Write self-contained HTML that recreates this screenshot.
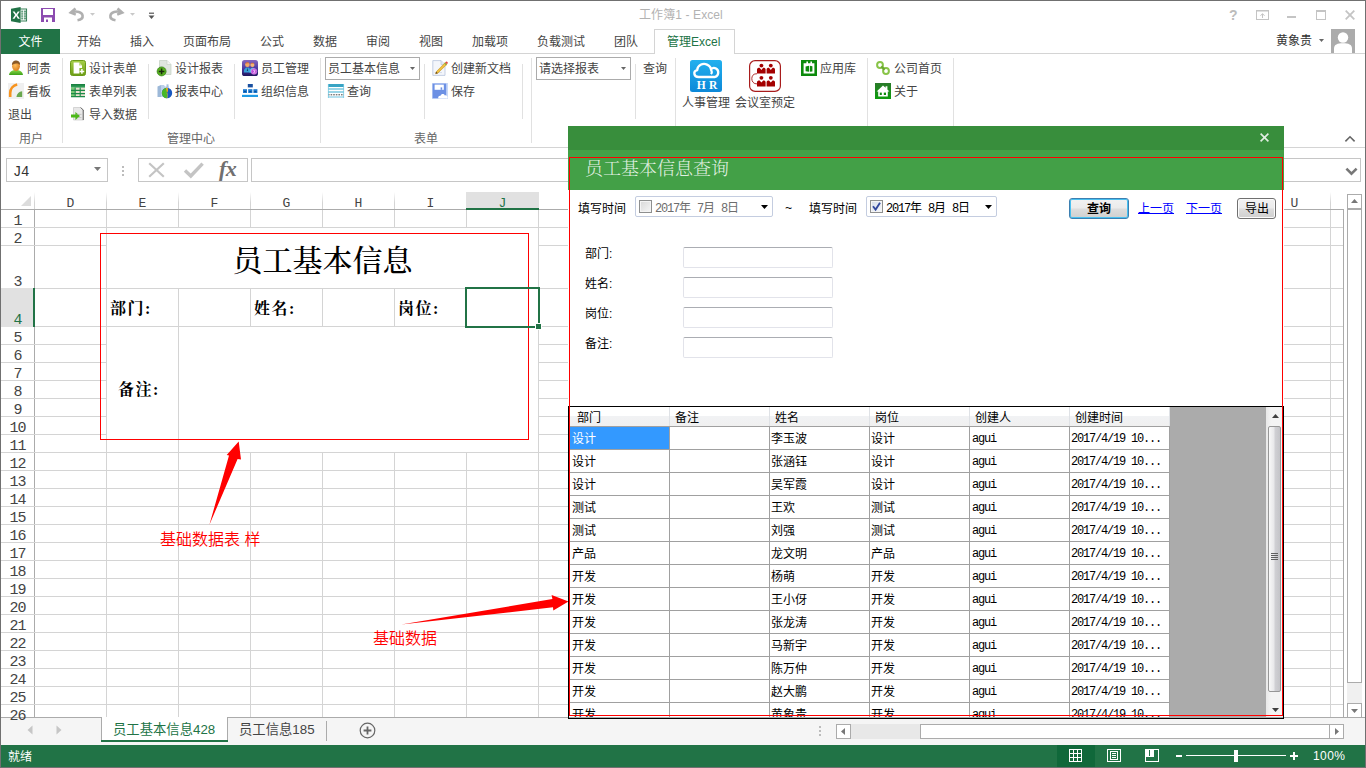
<!DOCTYPE html>
<html lang="zh-CN">
<head>
<meta charset="utf-8">
<title>工作簿1 - Excel</title>
<style>
*{box-sizing:border-box;margin:0;padding:0}
html,body{width:1366px;height:768px;overflow:hidden;background:#fff}
body{position:relative;font-family:"Liberation Sans","Noto Sans CJK SC",sans-serif;font-size:12px;color:#444;line-height:1}
.abs{position:absolute}
.t{position:absolute;white-space:nowrap;line-height:16px;height:16px}
svg{position:absolute;overflow:visible}
/* window frame */
#frame{left:0;top:0;width:1366px;height:768px;border:1px solid #707070;z-index:50;pointer-events:none}
/* tabs */
.tab{position:absolute;top:33px;height:18px;line-height:18px;font-size:12px;color:#444;white-space:nowrap}
#filetab{left:1px;top:29px;width:59px;height:25px;background:#217346;color:#fff;text-align:center;line-height:26px;font-size:12px}
#tabline{left:1px;top:53px;width:1364px;height:1px;background:#d4d4d4}
#acttab{left:654px;top:29px;width:81px;height:25px;border:1px solid #d4d4d4;border-bottom:none;background:#fff}
/* ribbon */
.rb{position:absolute;font-size:12px;color:#444;white-space:nowrap;line-height:16px;height:16px}
.sep{position:absolute;width:1px;background:#e1e1e1}
.glabel{position:absolute;top:131px;font-size:12px;color:#666;line-height:16px;white-space:nowrap}
#ribline{left:1px;top:147px;width:1364px;height:1px;background:#d4d4d4}
.combo{position:absolute;height:21px;border:1px solid #ababab;background:#fff;font-size:12px;line-height:23px;padding-left:2px;color:#444;white-space:nowrap}
/* grid */
.ch{position:absolute;z-index:3;top:192px;height:17px;font-family:"Liberation Mono","Noto Serif CJK SC",monospace;font-size:13px;color:#444;text-align:center;line-height:24px}
.rh{position:absolute;z-index:3;left:1px;width:33px;font-family:"Liberation Mono","Noto Serif CJK SC",monospace;font-size:15px;color:#444;line-height:16px;height:16px;text-align:center;letter-spacing:-1px}
.vl{position:absolute;width:1px;background:#d4d4d4}
.hl{position:absolute;height:1px;background:#d4d4d4}
.b16{font-size:16px;font-weight:bold;line-height:20px;letter-spacing:1.5px}
.cell{position:absolute;font-family:"Liberation Serif","Noto Serif CJK SC",serif;color:#000;white-space:nowrap}
.dt{position:absolute;white-space:nowrap;font-size:12px;line-height:18px;height:16px;color:#000;font-family:"Liberation Sans","Noto Sans CJK SC",sans-serif}
.mn{font-family:"Liberation Mono",monospace;font-size:12px;letter-spacing:-1.2px}
.mn2{font-family:"Liberation Mono",monospace;font-size:12px;letter-spacing:-1.2px}
.dp{position:absolute;height:21px;border:1px solid #c4cde0;border-radius:2px;background:#fff}
.tb{position:absolute;width:150px;height:21px;border:1px solid #e2e3ea;border-top-color:#abadb3;border-radius:2px;background:#fff}
</style>
</head>
<body>
<!-- ===== TITLE BAR ===== -->
<div id="titlebar" class="abs" style="left:0;top:0;width:1366px;height:29px;background:#fff"></div>
<div class="t" style="left:639px;top:7px;font-size:12px;color:#b2b2b2;letter-spacing:0.1px">工作簿1 - Excel</div>

<!--CHROME-START-->
<!-- QAT icons -->
<svg style="left:11px;top:7px" width="16" height="16" viewBox="0 0 16 16"><rect x="8" y="2" width="7.6" height="12" fill="#fff" stroke="#217346" stroke-width="0.9"/><path d="M10.2 4.2h2M13 4.2h2M10.2 6.1h2M13 6.1h2M10.2 8h2M13 8h2M10.2 9.9h2M13 9.9h2M10.2 11.8h2M13 11.8h2" stroke="#217346" stroke-width="1" fill="none"/><path d="M0 1.8L9.6 0V16L0 14.2Z" fill="#217346"/><path d="M1.6 4.4L4.1 8L1.5 11.8H3.5L5.2 9.1L6.9 11.8H8.9L6.3 8L8.8 4.4H6.8L5.2 6.9L3.6 4.4Z" fill="#fff"/></svg>
<svg style="left:41px;top:8px" width="14" height="14" viewBox="0 0 14 14"><path d="M0 0H14V14H0Z" fill="#8c4bb0"/><rect x="2" y="1" width="10" height="6" fill="#fff"/><rect x="3" y="9.5" width="8" height="4.5" fill="#fff"/><rect x="5" y="11.5" width="2" height="2.5" fill="#8c4bb0"/></svg>
<svg style="left:69px;top:7px" width="28" height="15" viewBox="0 0 28 15"><path d="M6.5 1.5L1.8 5.5L6.8 7.6" fill="none" stroke="#b0b0b0" stroke-width="2.6" stroke-linejoin="miter"/><path d="M2.5 5.2C8 3.6 13 5 13.6 8.6C14 11 12 12.6 8.5 13.2" fill="none" stroke="#b0b0b0" stroke-width="2.6"/><path d="M21 6H26L23.5 8.8Z" fill="#c8c8c8"/></svg>
<svg style="left:109px;top:7px" width="28" height="15" viewBox="0 0 28 15"><path d="M8.5 1.5L13.2 5.5L8.2 7.6" fill="none" stroke="#b0b0b0" stroke-width="2.6" stroke-linejoin="miter"/><path d="M12.5 5.2C7 3.6 2 5 1.4 8.6C1 11 3 12.6 6.5 13.2" fill="none" stroke="#b0b0b0" stroke-width="2.6"/><path d="M21 6H26L23.5 8.8Z" fill="#c8c8c8"/></svg>
<svg style="left:148px;top:12px" width="7" height="8" viewBox="0 0 7 8"><rect x="1" y="0.6" width="5" height="1.2" fill="#555"/><path d="M0.5 3.5H6.5L3.5 7Z" fill="#555"/></svg>
<!-- window controls -->
<div class="t" style="left:1229px;top:7px;font-size:14px;font-weight:bold;color:#bcbcbc;font-family:'Liberation Sans',sans-serif">?</div>
<svg style="left:1256px;top:10px" width="13" height="10" viewBox="0 0 13 10"><rect x="0.5" y="0.5" width="12" height="9" fill="none" stroke="#c4c4c4"/><path d="M0 1H13" stroke="#c4c4c4" stroke-width="1"/><path d="M6.5 8V4M4.5 5.8L6.5 3.6L8.5 5.8" fill="none" stroke="#c4c4c4" stroke-width="1"/></svg>
<div class="abs" style="left:1287px;top:16px;width:9px;height:2px;background:#c4c4c4"></div>
<div class="abs" style="left:1316px;top:10px;width:10px;height:10px;border:1px solid #c4c4c4;border-top-width:2px"></div>
<svg style="left:1345px;top:10px" width="10" height="10" viewBox="0 0 10 10"><path d="M0.7 0.7L9.3 9.3M9.3 0.7L0.7 9.3" stroke="#c4c4c4" stroke-width="1.8"/></svg>
<!-- user -->
<svg style="left:1319px;top:39px" width="5" height="3" viewBox="0 0 5 3"><path d="M0 0H5L2.5 3Z" fill="#666"/></svg>
<svg style="left:1331px;top:29px" width="24" height="24" viewBox="0 0 24 24"><rect width="24" height="24" fill="#ababab"/><circle cx="12" cy="8.5" r="5.2" fill="#fff"/><path d="M3 24V19.5C3 15.5 6.5 14.2 12 14.2S21 15.5 21 19.5V24Z" fill="#fff"/></svg>

<!--CHROME-END-->
<!-- ===== TABS ===== -->
<div id="tabline" class="abs"></div>
<div id="filetab" class="abs">文件</div>
<div class="tab" style="left:77px">开始</div>
<div class="tab" style="left:130px">插入</div>
<div class="tab" style="left:183px">页面布局</div>
<div class="tab" style="left:260px">公式</div>
<div class="tab" style="left:313px">数据</div>
<div class="tab" style="left:366px">审阅</div>
<div class="tab" style="left:419px">视图</div>
<div class="tab" style="left:472px">加载项</div>
<div class="tab" style="left:537px">负载测试</div>
<div class="tab" style="left:614px">团队</div>
<div id="acttab" class="abs"></div>
<div class="tab" style="left:667px;color:#217346">管理Excel</div>
<div class="tab" style="left:1276px;top:32px;color:#333">黄象贵</div>

<!-- ===== RIBBON ===== -->
<div id="ribbon" class="abs" style="left:1px;top:54px;width:1364px;height:93px;background:#fff"></div>
<div id="ribline" class="abs"></div>
<!--RIBBON-START-->
<!-- group separators -->
<div class="sep" style="left:62px;top:58px;height:85px"></div>
<div class="sep" style="left:320px;top:58px;height:85px"></div>
<div class="sep" style="left:531px;top:58px;height:85px"></div>
<div class="sep" style="left:675px;top:58px;height:85px"></div>
<div class="sep" style="left:867px;top:58px;height:85px"></div>
<div class="sep" style="left:953px;top:58px;height:85px"></div>
<!-- small separators -->
<div class="sep" style="left:148px;top:64px;height:55px"></div>
<div class="sep" style="left:234px;top:64px;height:55px"></div>
<div class="sep" style="left:424px;top:64px;height:55px"></div>
<div class="sep" style="left:522px;top:64px;height:55px"></div>
<div class="sep" style="left:635px;top:64px;height:55px"></div>
<!-- group labels -->
<div class="glabel" style="left:19px">用户</div>
<div class="glabel" style="left:167px">管理中心</div>
<div class="glabel" style="left:414px">表单</div>
<!-- 用户 -->
<svg style="left:9px;top:60px" width="14" height="15" viewBox="0 0 14 15"><defs><radialGradient id="hd" cx="0.4" cy="0.4" r="0.7"><stop offset="0" stop-color="#ffc060"/><stop offset="1" stop-color="#d87818"/></radialGradient><linearGradient id="sh" x1="0" y1="0" x2="0" y2="1"><stop offset="0" stop-color="#8ad848"/><stop offset="1" stop-color="#3ca018"/></linearGradient></defs><path d="M0 15C0.5 11.5 3 10 7 10S13.5 11.5 14 15Z" fill="url(#sh)"/><ellipse cx="7" cy="6.3" rx="3.9" ry="4.6" fill="url(#hd)"/><path d="M3 5.2C2.6 1.8 5 0.2 7.5 0.4C10 0.6 11.4 2.4 11 5C10 3.8 8.5 3.2 7 3.6C5.5 4 4 4 3 5.2Z" fill="#8a5a28"/></svg>
<div class="rb" style="left:27px;top:61px">阿贵</div>
<svg style="left:8px;top:83px" width="16" height="16" viewBox="0 0 16 16"><rect width="16" height="16" fill="#f0f0f0"/><path d="M2.2 14V10C2.2 6 5 2.6 9.2 1.6" fill="none" stroke="#f7931e" stroke-width="2.6"/><path d="M8.4 14H14.2V8.2C11 8.6 8.8 10.6 8.4 14Z" fill="#6aa84f"/></svg>
<div class="rb" style="left:27px;top:84px">看板</div>
<div class="rb" style="left:8px;top:107px">退出</div>
<!-- 管理中心 col 1 -->
<svg style="left:70px;top:60px" width="16" height="16" viewBox="0 0 16 16"><defs><linearGradient id="g1" x1="0" y1="0" x2="0" y2="1"><stop offset="0" stop-color="#a6cf4a"/><stop offset="1" stop-color="#6c9c14"/></linearGradient></defs><rect x="0.5" y="0.5" width="15" height="15" rx="2" fill="url(#g1)" stroke="#6a9a18"/><path d="M3.6 2.6H9.2L12 5.4V8H9.4V13.4H3.6Z" fill="#fff"/><path d="M9 2.6V5.6H12" fill="#c8e090"/><path d="M9.6 11.4H14.2M11.9 9.1V13.7" stroke="#fff" stroke-width="1.5"/></svg>
<div class="rb" style="left:89px;top:61px">设计表单</div>
<svg style="left:71px;top:84px" width="14" height="13" viewBox="0 0 14 13"><defs><linearGradient id="g2" x1="0" y1="0" x2="0" y2="1"><stop offset="0" stop-color="#167a3c"/><stop offset="1" stop-color="#38a860"/></linearGradient></defs><rect width="14" height="13" fill="#e8e0d0"/><rect width="14" height="3.6" fill="url(#g2)"/><rect x="0" y="3.6" width="4" height="9.4" fill="#7cc878"/><path d="M0 6.4H14M0 9.6H14M0 12.6H14" stroke="#1c8a48" stroke-width="1.1"/><path d="M4.2 3.6V13M9.2 3.6V13" stroke="#1c8a48" stroke-width="1.1"/></svg>
<div class="rb" style="left:89px;top:84px">表单列表</div>
<svg style="left:71px;top:107px" width="14" height="14" viewBox="0 0 14 14"><path d="M2.5 0.5H10L12.5 3V13H2.5Z" fill="#e8e8e8" stroke="#c0c0c0" stroke-width="0.6"/><path d="M12.2 3V13" stroke="#555" stroke-width="0.9"/><path d="M9.6 0.6L12.4 3.2" stroke="#555" stroke-width="0.8"/><path d="M0 7.6H4.4V5L9 9L4.4 13V10.4H0Z" fill="#4cb818"/><path d="M5.5 7.4H10.5M6.5 10.6H10.5" stroke="#aaa" stroke-width="0.6"/></svg>
<div class="rb" style="left:89px;top:107px">导入数据</div>
<!-- col 2 -->
<svg style="left:157px;top:60px" width="15" height="16" viewBox="0 0 15 16"><path d="M2.5 0.5H10L14 4.5V14.5H2.5Z" fill="#dfe6df" stroke="#c2cec2" stroke-width="0.7"/><path d="M10 0.5V4.5H14" fill="#f4f7f4" stroke="#c2cec2" stroke-width="0.6"/><circle cx="4.6" cy="11.4" r="4.5" fill="#58b020"/><circle cx="4.6" cy="11.4" r="4.5" fill="none" stroke="#2c7c10" stroke-width="0.7"/><path d="M1.8 11.4H7.4M4.6 8.6V14.2" stroke="#1a2a10" stroke-width="1.5"/></svg>
<div class="rb" style="left:175px;top:61px">设计报表</div>
<svg style="left:157px;top:84px" width="16" height="15" viewBox="0 0 16 15"><path d="M0.5 2.5L4 1V13H0.5Z" fill="#9cb8d8"/><path d="M4 1H7L8 2.4H12V13H4Z" fill="#bcd0e8"/><path d="M9.5 0.3H11.5V3H9.5Z" fill="#a8c0dc"/><circle cx="10" cy="9" r="5.2" fill="#1858c0"/><path d="M10 9V3.8A5.2 5.2 0 0 0 10 14.2Z" fill="#48b828"/><path d="M10 9L9 4A5.2 5.2 0 0 1 10.8 3.9L11 7Z" fill="#f0a818"/><path d="M10 9C11 10.5 10.5 12.5 10 14.2" stroke="#f0c030" stroke-width="0.6" fill="none"/></svg>
<div class="rb" style="left:175px;top:84px">报表中心</div>
<!-- col 3 -->
<svg style="left:242px;top:60px" width="16" height="16" viewBox="0 0 16 16"><defs><linearGradient id="g3" x1="0" y1="0" x2="0" y2="1"><stop offset="0" stop-color="#8868c0"/><stop offset="0.55" stop-color="#4838a0"/><stop offset="1" stop-color="#20145c"/></linearGradient></defs><rect width="16" height="16" rx="2.6" fill="url(#g3)"/><circle cx="5.4" cy="4.8" r="2.3" fill="#f0a868"/><circle cx="10.4" cy="5" r="2.1" fill="#f4b478"/><path d="M3.4 3.8C3.8 2 6.4 1.8 7.4 3.4C6 3 4.6 3.2 3.4 3.8Z" fill="#d86830"/><path d="M8.6 4C9 2.4 11.6 2.4 12.2 4C11 3.6 9.8 3.6 8.6 4Z" fill="#e07838"/><path d="M1.8 12.6C1.8 9 3.4 7.6 5.4 7.6S9 9 9 12.6Z" fill="#38a0d8"/><path d="M7.4 12.6C7.4 9.4 8.6 7.8 10.6 7.8S13.6 9.4 13.6 12.6Z" fill="#58b8e8"/><path d="M5.4 7.6L4.8 11H6Z" fill="#183868"/><circle cx="12" cy="11.4" r="2.9" fill="#c050d8"/><circle cx="12" cy="11.4" r="2.9" fill="none" stroke="#e8a0f0" stroke-width="0.5"/><path d="M11 10.2H12.8C13.4 10.6 12.8 11.4 12 11.4C13 11.4 13.4 12.6 12.4 12.8H11" stroke="#f8e0ff" stroke-width="0.7" fill="none"/></svg>
<div class="rb" style="left:261px;top:61px">员工管理</div>
<svg style="left:242px;top:84px" width="16" height="13" viewBox="0 0 16 13"><rect x="5.8" y="0" width="5" height="3.4" fill="#1a50a0"/><rect x="1" y="5.2" width="4" height="3.8" fill="#1878d0"/><rect x="6.2" y="5.2" width="4.2" height="3.8" fill="#1878d0"/><rect x="11.4" y="5.2" width="4" height="3.8" fill="#1878d0"/><path d="M2 7.6H4M7.2 7.6H9.4M12.4 7.6H14.4" stroke="#0c4890" stroke-width="1"/><rect x="0" y="10.8" width="16" height="2.2" fill="#1e9ae4"/></svg>
<div class="rb" style="left:261px;top:84px">组织信息</div>
<!-- 表单 group -->
<div class="combo" style="left:325px;top:57px;width:95px;height:23px">员工基本信息</div>
<svg style="left:410px;top:67px" width="5" height="3" viewBox="0 0 5 3"><path d="M0 0H5L2.5 3Z" fill="#666"/></svg>
<svg style="left:328px;top:84px" width="16" height="14" viewBox="0 0 16 14"><rect width="16" height="14" fill="#fff"/><rect width="16" height="3" fill="#38a4c4"/><path d="M0 5H16M0 8H16" stroke="#78c8e0" stroke-width="1.6"/><path d="M0 10.8H16" stroke="#444" stroke-width="1" stroke-dasharray="1.6 1"/><path d="M0 13H16" stroke="#98d4e8" stroke-width="1.4"/><path d="M0.4 0V14M15.6 0V14" stroke="#78c8e0" stroke-width="0.8"/></svg>
<div class="rb" style="left:347px;top:84px">查询</div>
<svg style="left:432px;top:60px" width="17" height="16" viewBox="0 0 17 16"><path d="M0.8 0.6H9L13 4.6V15.4H0.8Z" fill="#f4f6fb" stroke="#b8c4dc" stroke-width="0.8"/><path d="M9 0.6V4.6H13" fill="#e0e8f4" stroke="#b8c4dc" stroke-width="0.7"/><path d="M2.6 12.6H10" stroke="#c8d0e0" stroke-width="0.7"/><path d="M4.2 11.8L13.2 2.6L15 4.2L5.8 13.2L3.6 13.8Z" fill="#f0c040" stroke="#b88818" stroke-width="0.5"/><path d="M13.2 2.6L14.2 1.6C14.8 1.2 16 2.2 15.8 3L15 4.2Z" fill="#e04848"/><path d="M12.6 3.2L14.4 4.8" stroke="#38a038" stroke-width="0.9"/><path d="M4.2 11.8L3.6 13.8L5.8 13.2Z" fill="#604020"/></svg>
<div class="rb" style="left:451px;top:61px">创建新文档</div>
<svg style="left:432px;top:83px" width="16" height="16" viewBox="0 0 16 16"><rect width="16" height="16" fill="#c8d8f8"/><rect x="0.6" y="0.6" width="13.6" height="14.6" fill="#6c90e4"/><rect x="2.6" y="1.6" width="9.2" height="5.2" fill="#fff"/><rect x="8.6" y="4.4" width="1.6" height="2.4" fill="#6c90e4"/><path d="M6.4 15.4C5.6 13.6 7.2 12.4 8.6 12.8C9 10.8 12 10.4 12.8 12.4C14.6 12 16 13.6 15.4 15.4Z" fill="#fff"/></svg>
<div class="rb" style="left:451px;top:84px">保存</div>
<!-- report group -->
<div class="combo" style="left:536px;top:57px;width:95px;height:23px">请选择报表</div>
<svg style="left:621px;top:67px" width="5" height="3" viewBox="0 0 5 3"><path d="M0 0H5L2.5 3Z" fill="#666"/></svg>
<div class="rb" style="left:643px;top:61px">查询</div>
<!-- HR -->
<svg style="left:690px;top:60px" width="32" height="32" viewBox="0 0 32 32"><defs><linearGradient id="g4" x1="0" y1="0" x2="0" y2="1"><stop offset="0" stop-color="#22b0ee"/><stop offset="1" stop-color="#0c88d8"/></linearGradient></defs><rect width="32" height="32" rx="2.5" fill="url(#g4)"/><path d="M8.6 17C3.6 17 2.8 11.2 7.2 10.2C7.4 5.4 12.8 2.6 17 4.6C19.6 5.8 21 8.2 21 9.8C21.4 8 24 7.4 26 8.6C29.4 10.6 28.8 15.6 25 17Z" fill="none" stroke="#fff" stroke-width="2.3" stroke-linejoin="round"/><path d="M21 9.8C22 11.2 22 13 21 14.2" fill="none" stroke="#fff" stroke-width="2.1"/><text x="18.6" y="28.8" font-family="'Liberation Serif',serif" font-weight="bold" font-size="11.5" fill="#fff" text-anchor="middle" letter-spacing="3.2">HR</text></svg>
<div class="rb" style="left:682px;top:95px">人事管理</div>
<!-- meeting -->
<svg style="left:749px;top:60px" width="32" height="32" viewBox="0 0 32 32"><rect x="0.6" y="0.6" width="30.8" height="30.8" rx="5.5" fill="#fff" stroke="#a81c1c" stroke-width="1.2"/><g fill="#a40000"><circle cx="12.4" cy="5.6" r="1.9"/><path d="M8 13.4V9.4C8 8.4 9 7.8 10.6 7.8L12.4 10L14.2 7.8C15.8 7.8 16.6 8.4 16.6 9.4V13.4Z"/><circle cx="21.8" cy="5.6" r="1.9"/><path d="M17.6 13.4V9.4C17.6 8.4 18.4 7.8 20 7.8L21.8 10L23.6 7.8C25.2 7.8 26 8.4 26 9.4V13.4Z"/><circle cx="12.4" cy="17.8" r="1.9"/><path d="M8 26.4V22C8 21 9 20.4 10.6 20.4L12.4 22.4L14.2 20.4C15.8 20.4 16.6 21 16.6 22V26.4Z"/><circle cx="21.8" cy="17.8" r="1.9"/><path d="M17.6 26.4V22C17.6 21 18.4 20.4 20 20.4L21.8 22.4L23.6 20.4C25.2 20.4 26 21 26 22V26.4Z"/></g><path d="M8 13.8H7C1.4 13.8 1.4 23.4 7 23.8H8" fill="none" stroke="#a81c1c" stroke-width="0.9"/></svg>
<div class="rb" style="left:735px;top:95px">会议室预定</div>
<!-- app lib -->
<svg style="left:801px;top:60px" width="16" height="16" viewBox="0 0 16 16"><rect width="16" height="16" fill="#0c8a0c"/><path d="M2.6 3.2H5.4V1.6H7V3.2H9.4V1.6H11V3.2H13.4V13.6H2.6Z" fill="#fff"/><path d="M4.6 6.4L8 5.8V11.8L4.6 11.2Z" fill="#0c8a0c"/><path d="M8.8 5.8L11.4 6.2V11.4L8.8 11.8Z" fill="#0c8a0c"/></svg>
<div class="rb" style="left:820px;top:61px">应用库</div>
<!-- links -->
<svg style="left:876px;top:61px" width="14" height="14" viewBox="0 0 14 14"><circle cx="4" cy="4" r="2.9" fill="none" stroke="#88c448" stroke-width="2"/><circle cx="10" cy="10" r="2.9" fill="none" stroke="#88c448" stroke-width="2"/><path d="M5.4 5.4L8.6 8.6" stroke="#6aa830" stroke-width="2.2"/></svg>
<div class="rb" style="left:894px;top:61px">公司首页</div>
<svg style="left:875px;top:83px" width="16" height="16" viewBox="0 0 16 16"><defs><linearGradient id="g5" x1="0" y1="0" x2="0" y2="1"><stop offset="0" stop-color="#2a7a2a"/><stop offset="1" stop-color="#0c9c0c"/></linearGradient></defs><rect width="16" height="16" fill="url(#g5)"/><path d="M1.6 8.4L8 2.4L10.6 4.8V3.2H12.4V6.4L14.4 8.4H12.8V13.6H3.2V8.4Z" fill="#fff"/><rect x="4.8" y="9.6" width="2" height="2.4" fill="#0c8a0c"/><rect x="8.8" y="9.6" width="2.2" height="2.4" fill="#0c8a0c"/></svg>
<div class="rb" style="left:894px;top:84px">关于</div>
<!-- collapse caret -->
<svg style="left:1344px;top:135px" width="12" height="8" viewBox="0 0 12 8"><path d="M1.4 6.4L6 1.8L10.6 6.4" fill="none" stroke="#666" stroke-width="1.6"/></svg>

<!--RIBBON-END-->

<!-- ===== FORMULA BAR ===== -->
<div id="fbar" class="abs" style="left:1px;top:148px;width:1364px;height:44px;background:#fff"></div>

<!-- ===== GRID ===== -->
<div id="grid" class="abs" style="left:1px;top:192px;width:1343px;height:526px;background:#fff"></div>
<!--GRID-START-->
<div class="abs" style="left:1px;top:192px;width:1343px;height:18px;background:#fff"></div>
<div class="abs" style="left:466px;top:192px;width:73px;height:18px;background:#e1e1e1;border-bottom:2px solid #217346;z-index:2"></div>
<div class="abs" style="left:1px;top:288px;width:34px;height:39px;background:#e1e1e1;border-right:2px solid #217346;z-index:2"></div>
<div class="vl" style="left:34px;top:192px;height:18px;background:linear-gradient(#fff,#d4d4d4 60%)"></div>
<div class="vl" style="left:106px;top:192px;height:18px;background:linear-gradient(#fff,#d4d4d4 60%)"></div>
<div class="vl" style="left:178px;top:192px;height:18px;background:linear-gradient(#fff,#d4d4d4 60%)"></div>
<div class="vl" style="left:250px;top:192px;height:18px;background:linear-gradient(#fff,#d4d4d4 60%)"></div>
<div class="vl" style="left:322px;top:192px;height:18px;background:linear-gradient(#fff,#d4d4d4 60%)"></div>
<div class="vl" style="left:394px;top:192px;height:18px;background:linear-gradient(#fff,#d4d4d4 60%)"></div>
<div class="vl" style="left:466px;top:192px;height:18px;background:linear-gradient(#fff,#d4d4d4 60%)"></div>
<div class="vl" style="left:538px;top:192px;height:18px;background:linear-gradient(#fff,#d4d4d4 60%)"></div>
<div class="vl" style="left:610px;top:192px;height:18px;background:linear-gradient(#fff,#d4d4d4 60%)"></div>
<div class="vl" style="left:682px;top:192px;height:18px;background:linear-gradient(#fff,#d4d4d4 60%)"></div>
<div class="vl" style="left:754px;top:192px;height:18px;background:linear-gradient(#fff,#d4d4d4 60%)"></div>
<div class="vl" style="left:826px;top:192px;height:18px;background:linear-gradient(#fff,#d4d4d4 60%)"></div>
<div class="vl" style="left:898px;top:192px;height:18px;background:linear-gradient(#fff,#d4d4d4 60%)"></div>
<div class="vl" style="left:970px;top:192px;height:18px;background:linear-gradient(#fff,#d4d4d4 60%)"></div>
<div class="vl" style="left:1042px;top:192px;height:18px;background:linear-gradient(#fff,#d4d4d4 60%)"></div>
<div class="vl" style="left:1114px;top:192px;height:18px;background:linear-gradient(#fff,#d4d4d4 60%)"></div>
<div class="vl" style="left:1186px;top:192px;height:18px;background:linear-gradient(#fff,#d4d4d4 60%)"></div>
<div class="vl" style="left:1258px;top:192px;height:18px;background:linear-gradient(#fff,#d4d4d4 60%)"></div>
<div class="vl" style="left:1330px;top:192px;height:18px;background:linear-gradient(#fff,#d4d4d4 60%)"></div>
<div class="hl" style="left:1px;top:209px;width:1343px;background:#ababab"></div>
<div class="vl" style="left:34px;top:209px;height:509px;background:#ababab"></div>
<div class="hl" style="left:1px;top:227px;width:1343px;background:#d4d4d4"></div>
<div class="hl" style="left:1px;top:245px;width:1343px;background:#d4d4d4"></div>
<div class="hl" style="left:1px;top:288px;width:1343px;background:#d4d4d4"></div>
<div class="hl" style="left:1px;top:326px;width:1343px;background:#d4d4d4"></div>
<div class="hl" style="left:1px;top:344px;width:1343px;background:#d4d4d4"></div>
<div class="hl" style="left:1px;top:362px;width:1343px;background:#d4d4d4"></div>
<div class="hl" style="left:1px;top:380px;width:1343px;background:#d4d4d4"></div>
<div class="hl" style="left:1px;top:398px;width:1343px;background:#d4d4d4"></div>
<div class="hl" style="left:1px;top:416px;width:1343px;background:#d4d4d4"></div>
<div class="hl" style="left:1px;top:434px;width:1343px;background:#d4d4d4"></div>
<div class="hl" style="left:1px;top:452px;width:1343px;background:#d4d4d4"></div>
<div class="hl" style="left:1px;top:470px;width:1343px;background:#d4d4d4"></div>
<div class="hl" style="left:1px;top:488px;width:1343px;background:#d4d4d4"></div>
<div class="hl" style="left:1px;top:506px;width:1343px;background:#d4d4d4"></div>
<div class="hl" style="left:1px;top:524px;width:1343px;background:#d4d4d4"></div>
<div class="hl" style="left:1px;top:542px;width:1343px;background:#d4d4d4"></div>
<div class="hl" style="left:1px;top:560px;width:1343px;background:#d4d4d4"></div>
<div class="hl" style="left:1px;top:578px;width:1343px;background:#d4d4d4"></div>
<div class="hl" style="left:1px;top:596px;width:1343px;background:#d4d4d4"></div>
<div class="hl" style="left:1px;top:614px;width:1343px;background:#d4d4d4"></div>
<div class="hl" style="left:1px;top:632px;width:1343px;background:#d4d4d4"></div>
<div class="hl" style="left:1px;top:650px;width:1343px;background:#d4d4d4"></div>
<div class="hl" style="left:1px;top:668px;width:1343px;background:#d4d4d4"></div>
<div class="hl" style="left:1px;top:686px;width:1343px;background:#d4d4d4"></div>
<div class="hl" style="left:1px;top:704px;width:1343px;background:#d4d4d4"></div>
<div class="vl" style="left:106px;top:210px;height:508px;background:#d4d4d4"></div>
<div class="vl" style="left:178px;top:210px;height:508px;background:#d4d4d4"></div>
<div class="vl" style="left:250px;top:210px;height:508px;background:#d4d4d4"></div>
<div class="vl" style="left:322px;top:210px;height:508px;background:#d4d4d4"></div>
<div class="vl" style="left:394px;top:210px;height:508px;background:#d4d4d4"></div>
<div class="vl" style="left:466px;top:210px;height:508px;background:#d4d4d4"></div>
<div class="vl" style="left:538px;top:210px;height:508px;background:#d4d4d4"></div>
<div class="vl" style="left:610px;top:210px;height:508px;background:#d4d4d4"></div>
<div class="vl" style="left:682px;top:210px;height:508px;background:#d4d4d4"></div>
<div class="vl" style="left:754px;top:210px;height:508px;background:#d4d4d4"></div>
<div class="vl" style="left:826px;top:210px;height:508px;background:#d4d4d4"></div>
<div class="vl" style="left:898px;top:210px;height:508px;background:#d4d4d4"></div>
<div class="vl" style="left:970px;top:210px;height:508px;background:#d4d4d4"></div>
<div class="vl" style="left:1042px;top:210px;height:508px;background:#d4d4d4"></div>
<div class="vl" style="left:1114px;top:210px;height:508px;background:#d4d4d4"></div>
<div class="vl" style="left:1186px;top:210px;height:508px;background:#d4d4d4"></div>
<div class="vl" style="left:1258px;top:210px;height:508px;background:#d4d4d4"></div>
<div class="vl" style="left:1330px;top:210px;height:508px;background:#d4d4d4"></div>
<div class="vl" style="left:1343px;top:209px;height:509px;background:#ababab"></div>
<div class="abs" style="left:107px;top:228px;width:431px;height:60px;background:#fff"></div>
<div class="abs" style="left:107px;top:327px;width:71px;height:125px;background:#fff"></div>
<div class="abs" style="left:179px;top:327px;width:359px;height:125px;background:#fff"></div>
<div class="ch" style="left:35px;width:71px;color:#444">D</div>
<div class="ch" style="left:107px;width:71px;color:#444">E</div>
<div class="ch" style="left:179px;width:71px;color:#444">F</div>
<div class="ch" style="left:251px;width:71px;color:#444">G</div>
<div class="ch" style="left:323px;width:71px;color:#444">H</div>
<div class="ch" style="left:395px;width:71px;color:#444">I</div>
<div class="ch" style="left:467px;width:71px;color:#217346">J</div>
<div class="ch" style="left:1259px;width:71px;color:#444">U</div>
<div class="rh" style="top:214px;color:#444">1</div>
<div class="rh" style="top:232px;color:#444">2</div>
<div class="rh" style="top:275px;color:#444">3</div>
<div class="rh" style="top:313px;color:#217346">4</div>
<div class="rh" style="top:331px;color:#444">5</div>
<div class="rh" style="top:349px;color:#444">6</div>
<div class="rh" style="top:367px;color:#444">7</div>
<div class="rh" style="top:385px;color:#444">8</div>
<div class="rh" style="top:403px;color:#444">9</div>
<div class="rh" style="top:421px;color:#444">10</div>
<div class="rh" style="top:439px;color:#444">11</div>
<div class="rh" style="top:457px;color:#444">12</div>
<div class="rh" style="top:475px;color:#444">13</div>
<div class="rh" style="top:493px;color:#444">14</div>
<div class="rh" style="top:511px;color:#444">15</div>
<div class="rh" style="top:529px;color:#444">16</div>
<div class="rh" style="top:547px;color:#444">17</div>
<div class="rh" style="top:565px;color:#444">18</div>
<div class="rh" style="top:583px;color:#444">19</div>
<div class="rh" style="top:601px;color:#444">20</div>
<div class="rh" style="top:619px;color:#444">21</div>
<div class="rh" style="top:637px;color:#444">22</div>
<div class="rh" style="top:655px;color:#444">23</div>
<div class="rh" style="top:673px;color:#444">24</div>
<div class="rh" style="top:691px;color:#444">25</div>
<div class="rh" style="top:709px;color:#444">26</div>
<svg style="left:21px;top:196px" width="10" height="10"><path d="M10 0V10H0Z" fill="#dcdcdc"/></svg>
<!--GRID-END-->
<!--CELLS-START-->
<div class="cell" style="left:107px;top:244px;width:431px;text-align:center;font-size:30px;font-weight:500;line-height:34px;letter-spacing:0px">员工基本信息</div>
<div class="cell b16" style="left:110px;top:299px">部门:</div>
<div class="cell b16" style="left:254px;top:299px">姓名:</div>
<div class="cell b16" style="left:398px;top:299px">岗位:</div>
<div class="cell b16" style="left:118px;top:380px">备注:</div>
<!-- red outline -->
<div class="abs" style="left:100px;top:233px;width:429px;height:207px;border:1px solid #ff0000"></div>
<!-- selection J4 -->
<div class="abs" style="left:465px;top:287px;width:75px;height:41px;border:2px solid #217346"></div>
<div class="abs" style="left:535px;top:323px;width:7px;height:7px;background:#217346;border:1px solid #fff"></div>
<!-- arrows -->
<svg style="left:0;top:0" width="1366" height="768"><path d="M209.4 524.8L229 455.6L226.7 455L238.7 441.5L241 459.6L237.6 459Z" fill="#ff0000"/><path d="M401.3 624.5L552.4 599L551.6 595.1L568.5 601.6L553.3 610.4L553 607.3Z" fill="#ff0000"/></svg>
<div class="t" style="left:160px;top:530px;font-size:16px;line-height:20px;height:20px;color:#ff0000;font-weight:350">基础数据表 样</div>
<div class="t" style="left:373px;top:629px;font-size:16px;line-height:20px;height:20px;color:#ff0000;font-weight:350">基础数据</div>

<!--CELLS-END-->

<!-- ===== SHEET TABS ===== -->
<div id="sheettabs" class="abs" style="left:1px;top:717px;width:1364px;height:28px;background:#f5f5f5"></div>

<!-- ===== STATUS BAR ===== -->
<div id="status" class="abs" style="left:1px;top:745px;width:1364px;height:22px;background:#217346"></div>
<div class="t" style="left:8px;top:749px;color:#fff;font-size:12px">就绪</div>

<!--BARS-START-->
<!-- formula bar -->
<div class="abs" style="left:6px;top:158px;width:102px;height:24px;border:1px solid #c6c6c6;background:#fff"></div>
<div class="t" style="left:13px;top:164px;font-family:'Liberation Mono','Noto Serif CJK SC',monospace;font-size:14px;color:#333;letter-spacing:-0.5px">J4</div>
<svg style="left:94px;top:167px" width="7" height="4" viewBox="0 0 7 4"><path d="M0 0H7L3.5 4Z" fill="#777"/></svg>
<svg style="left:122px;top:166px" width="2" height="10" viewBox="0 0 2 10" shape-rendering="crispEdges"><rect x="0" y="0" width="2" height="2" fill="#bcbcbc"/><rect x="0" y="4" width="2" height="2" fill="#bcbcbc"/><rect x="0" y="8" width="2" height="2" fill="#bcbcbc"/></svg>
<div class="abs" style="left:138px;top:158px;width:110px;height:24px;border:1px solid #c6c6c6;background:#fff"></div>
<svg style="left:148px;top:162px" width="18" height="16" viewBox="0 0 18 16"><path d="M1.2 1.2L15.8 14.8M15.8 1.2L1.2 14.8" stroke="#c4c4c4" stroke-width="2.2" fill="none"/></svg>
<svg style="left:184px;top:162px" width="20" height="16" viewBox="0 0 20 16"><path d="M1 8.6L6.8 14L18.6 1.6" stroke="#c4c4c4" stroke-width="3.4" fill="none"/></svg>
<div class="t" style="left:219px;top:158px;height:24px;line-height:22px;font-family:'Liberation Serif',serif;font-style:italic;font-weight:bold;font-size:22px;color:#707070;letter-spacing:-0.5px">fx</div>
<div class="abs" style="left:251px;top:158px;width:1110px;height:24px;border:1px solid #c6c6c6;background:#fff"></div>
<svg style="left:1345px;top:167px" width="13" height="9" viewBox="0 0 13 9"><path d="M1.4 1.6L6.5 6.6L11.6 1.6" fill="none" stroke="#777" stroke-width="2.6"/></svg>
<!-- vertical scrollbar -->
<div class="abs" style="left:1344px;top:192px;width:21px;height:526px;background:#fff"></div>
<div class="abs" style="left:1347px;top:209px;width:15px;height:495px;background:#f0f0f0"></div>
<div class="abs" style="left:1347px;top:194px;width:15px;height:15px;border:1px solid #ababab;background:#fff"></div>
<svg style="left:1351px;top:199px" width="7" height="4" viewBox="0 0 7 4"><path d="M0 4H7L3.5 0Z" fill="#777"/></svg>
<div class="abs" style="left:1347px;top:209px;width:15px;height:474px;border:1px solid #ababab;background:#fff"></div>
<div class="abs" style="left:1347px;top:703px;width:15px;height:15px;border:1px solid #ababab;background:#fff"></div>
<svg style="left:1351px;top:709px" width="7" height="4" viewBox="0 0 7 4"><path d="M0 0H7L3.5 4Z" fill="#777"/></svg>
<!-- sheet tab bar -->
<div class="abs" style="left:1px;top:717px;width:1364px;height:1px;background:#ababab"></div>
<svg style="left:27px;top:725px" width="6" height="10" viewBox="0 0 6 10"><path d="M5.5 0.5V9.5L0.5 5Z" fill="#c6c6c6"/></svg>
<svg style="left:56px;top:725px" width="6" height="10" viewBox="0 0 6 10"><path d="M0.5 0.5V9.5L5.5 5Z" fill="#c6c6c6"/></svg>
<div class="abs" style="left:101px;top:717px;width:127px;height:25px;background:#fff;border-left:1px solid #ababab;border-right:1px solid #ababab"></div><div class="abs" style="left:101px;top:740px;width:127px;height:2px;background:#217346"></div>
<div class="t" style="left:113px;top:720px;font-size:13.33px;line-height:19px;height:19px;color:#217346">员工基本信息428</div>
<div class="t" style="left:239px;top:720px;font-size:13.33px;line-height:19px;height:19px;color:#444">员工信息185</div>
<div class="abs" style="left:326px;top:721px;width:1px;height:20px;background:#ababab"></div>
<svg style="left:359px;top:722px" width="17" height="17" viewBox="0 0 17 17"><circle cx="8.5" cy="8.5" r="7.3" fill="none" stroke="#666" stroke-width="1.2"/><path d="M4.6 8.5H12.4M8.5 4.6V12.4" stroke="#666" stroke-width="1.8"/></svg>
<!-- hscroll -->
<svg style="left:819px;top:726px" width="2" height="10" viewBox="0 0 2 10" shape-rendering="crispEdges"><rect x="0" y="0" width="2" height="2" fill="#bcbcbc"/><rect x="0" y="4" width="2" height="2" fill="#bcbcbc"/><rect x="0" y="8" width="2" height="2" fill="#bcbcbc"/></svg>
<div class="abs" style="left:836px;top:724px;width:508px;height:15px;background:#e8e8e8"></div>
<div class="abs" style="left:836px;top:724px;width:15px;height:15px;border:1px solid #ababab;background:#fff"></div>
<svg style="left:841px;top:728px" width="4" height="7" viewBox="0 0 4 7"><path d="M4 0V7L0 3.5Z" fill="#777"/></svg>
<div class="abs" style="left:920px;top:724px;width:410px;height:15px;border:1px solid #ababab;background:#fff"></div>
<div class="abs" style="left:1329px;top:724px;width:15px;height:15px;border:1px solid #ababab;background:#fff"></div>
<svg style="left:1335px;top:728px" width="4" height="7" viewBox="0 0 4 7"><path d="M0 0V7L4 3.5Z" fill="#777"/></svg>
<!-- status bar right -->
<div class="abs" style="left:1057px;top:745px;width:38px;height:22px;background:#10683a"></div>
<svg style="left:1069px;top:749px" width="13" height="13" viewBox="0 0 13 13" shape-rendering="crispEdges"><path d="M0.5 0.5H12.5V12.5H0.5ZM0.5 4.5H12.5M0.5 8.5H12.5M4.5 0.5V12.5M8.5 0.5V12.5" fill="none" stroke="#fff" stroke-width="1"/></svg>
<svg style="left:1107px;top:749px" width="14" height="13" viewBox="0 0 14 13" shape-rendering="crispEdges"><path d="M0.5 0.5H13.5V12.5H0.5Z" fill="none" stroke="#fff" stroke-width="1"/><path d="M3.5 2.5H10.5V10.5H3.5ZM5 4.5H9M5 6.5H9M5 8.5H9" fill="none" stroke="#fff" stroke-width="1"/></svg>
<svg style="left:1145px;top:749px" width="14" height="13" viewBox="0 0 14 13" shape-rendering="crispEdges"><path d="M0.5 0.5H13.5V12.5H0.5Z" fill="none" stroke="#fff" stroke-width="1"/><path d="M1 1H9V8H1Z" fill="#fff"/><path d="M4.5 1V7" stroke="#217346" stroke-width="1"/></svg>
<div class="abs" style="left:1176px;top:755px;width:6px;height:2px;background:#fff"></div>
<div class="abs" style="left:1186px;top:755px;width:100px;height:1px;background:#fff"></div>
<div class="abs" style="left:1234px;top:750px;width:4px;height:12px;background:#fff"></div>
<svg style="left:1290px;top:752px" width="8" height="8" viewBox="0 0 8 8"><path d="M0 4H8M4 0V8" stroke="#fff" stroke-width="2"/></svg>
<div class="t" style="left:1313px;top:748px;font-size:12px;color:#fff;font-family:'Liberation Sans',sans-serif;letter-spacing:0.4px">100%</div>

<!--BARS-END-->
<!-- ===== DIALOG ===== -->
<!--DLG-START-->
<div class="abs" style="left:0;top:0;width:1366px;height:768px;z-index:10">
<div class="abs" style="left:568px;top:126px;width:716px;height:593px;background:#fff"></div>
<div class="abs" style="left:568px;top:126px;width:716px;height:24px;background:#388e3c"></div>
<div class="abs" style="left:568px;top:150px;width:716px;height:40px;background:#43a047"></div>
<svg style="left:1260px;top:133px" width="9" height="9" viewBox="0 0 9 9"><path d="M0.6 0.6L8.4 8.4M8.4 0.6L0.6 8.4" stroke="#fff" stroke-opacity="0.85" stroke-width="1.6"/></svg>
<div class="t" style="left:585px;top:157px;height:24px;line-height:24px;font-family:'Liberation Serif','Noto Serif CJK SC',serif;font-size:18px;font-weight:300;color:rgba(255,255,255,0.86)">员工基本信息查询</div>
<div class="dt" style="left:578px;top:200px">填写时间</div>
<div class="dp" style="left:635px;top:196px;width:138px"></div>
<div class="abs" style="left:639px;top:200px;width:13px;height:13px;border:1px solid #8e8f8f;background:linear-gradient(135deg,#d8d8d8,#f6f6f6);box-shadow:inset 0 0 0 1px #f4f4f4"></div>
<div class="dt" style="left:655px;top:199px;color:#6d6d6d"><span class="mn">2017</span>年<span class="mn"> 7</span>月<span class="mn"> 8</span>日</div>
<svg style="left:761px;top:205px" width="7" height="4" viewBox="0 0 7 4"><path d="M0 0H7L3.5 4Z" fill="#000"/></svg>
<div class="dt" style="left:785px;top:199px"><span class="mn" style="font-size:12px">~</span></div>
<div class="dt" style="left:809px;top:200px">填写时间</div>
<div class="dp" style="left:866px;top:196px;width:131px"></div>
<div class="abs" style="left:870px;top:200px;width:13px;height:13px;border:1px solid #8e8f8f;background:linear-gradient(135deg,#d4dce8,#f6f8fc);box-shadow:inset 0 0 0 1px #f4f4f4"></div>
<svg style="left:872px;top:202px" width="9" height="9" viewBox="0 0 9 9"><path d="M1 4.2L3.6 7.6L8 0.8" fill="none" stroke="#31479c" stroke-width="1.8"/></svg>
<div class="dt" style="left:886px;top:199px"><span class="mn">2017</span>年<span class="mn"> 8</span>月<span class="mn"> 8</span>日</div>
<svg style="left:985px;top:205px" width="7" height="4" viewBox="0 0 7 4"><path d="M0 0H7L3.5 4Z" fill="#000"/></svg>
<div class="abs" style="left:1069px;top:198px;width:60px;height:21px;border:1px solid #3c7fb1;border-radius:3px;background:linear-gradient(#f2f2f2 0%,#ebebeb 48%,#dddddd 52%,#cfcfcf 100%);box-shadow:inset 0 0 0 1px #48c0f0"></div>
<div class="dt" style="left:1087px;top:200px;font-weight:bold">查询</div>
<div class="dt" style="left:1138px;top:200px;color:#0000ff;text-decoration:underline;text-underline-offset:0px">上一页</div>
<div class="dt" style="left:1186px;top:200px;color:#0000ff;text-decoration:underline;text-underline-offset:0px">下一页</div>
<div class="abs" style="left:1237px;top:198px;width:39px;height:21px;border:1px solid #707070;border-radius:3px;background:linear-gradient(#f2f2f2 0%,#ebebeb 48%,#dddddd 52%,#cfcfcf 100%);box-shadow:inset 0 0 0 1px #fcfcfc"></div>
<div class="dt" style="left:1245px;top:200px">导出</div>
<div class="dt" style="left:585px;top:245px">部门:</div>
<div class="tb" style="left:683px;top:247px"></div>
<div class="dt" style="left:585px;top:275px">姓名:</div>
<div class="tb" style="left:683px;top:277px"></div>
<div class="dt" style="left:585px;top:305px">岗位:</div>
<div class="tb" style="left:683px;top:307px"></div>
<div class="dt" style="left:585px;top:335px">备注:</div>
<div class="tb" style="left:683px;top:337px"></div>
<div class="abs" style="left:568px;top:406px;width:716px;height:313px;background:#000"></div>
<div class="abs" style="left:569px;top:717px;width:714px;height:1px;background:#aaa"></div>
<div class="abs" style="left:569px;top:407px;width:714px;height:310px;background:#ababab;overflow:hidden" id="tbl">
<div class="abs" style="left:0;top:0;width:601px;height:19px;background:linear-gradient(#fff 0%,#fff 45%,#f1f2f4 50%,#f0f0f0 100%)"></div>
<div class="abs" style="left:0;top:19px;width:601px;height:1px;background:#a0a0a0"></div>
<div class="dt" style="left:8px;top:2px">部门</div>
<div class="abs" style="left:100px;top:0;width:1px;height:19px;background:#dfe2e6"></div>
<div class="dt" style="left:106px;top:2px">备注</div>
<div class="abs" style="left:200px;top:0;width:1px;height:19px;background:#dfe2e6"></div>
<div class="dt" style="left:206px;top:2px">姓名</div>
<div class="abs" style="left:300px;top:0;width:1px;height:19px;background:#dfe2e6"></div>
<div class="dt" style="left:306px;top:2px">岗位</div>
<div class="abs" style="left:400px;top:0;width:1px;height:19px;background:#dfe2e6"></div>
<div class="dt" style="left:406px;top:2px">创建人</div>
<div class="abs" style="left:500px;top:0;width:1px;height:19px;background:#dfe2e6"></div>
<div class="dt" style="left:506px;top:2px">创建时间</div>
<div class="abs" style="left:600px;top:0;width:1px;height:19px;background:#dfe2e6"></div>
<div class="abs" style="left:0;top:20px;width:601px;height:22px;background:#fff"></div>
<div class="abs" style="left:0;top:42px;width:601px;height:1px;background:#a0a0a0"></div>
<div class="abs" style="left:1px;top:20px;width:99px;height:22px;background:#3399ff"></div>
<div class="dt" style="left:3px;top:23px;color:#fff">设计</div>
<div class="dt" style="left:202px;top:23px">李玉波</div>
<div class="dt" style="left:302px;top:23px">设计</div>
<div class="dt mn2" style="left:403px;top:23px">agui</div>
<div class="dt mn2" style="left:502px;top:23px">2017/4/19 10...</div>
<div class="abs" style="left:0;top:43px;width:601px;height:22px;background:#fff"></div>
<div class="abs" style="left:0;top:65px;width:601px;height:1px;background:#a0a0a0"></div>
<div class="dt" style="left:3px;top:46px;color:#000">设计</div>
<div class="dt" style="left:202px;top:46px">张涵钰</div>
<div class="dt" style="left:302px;top:46px">设计</div>
<div class="dt mn2" style="left:403px;top:46px">agui</div>
<div class="dt mn2" style="left:502px;top:46px">2017/4/19 10...</div>
<div class="abs" style="left:0;top:66px;width:601px;height:22px;background:#fff"></div>
<div class="abs" style="left:0;top:88px;width:601px;height:1px;background:#a0a0a0"></div>
<div class="dt" style="left:3px;top:69px;color:#000">设计</div>
<div class="dt" style="left:202px;top:69px">吴军霞</div>
<div class="dt" style="left:302px;top:69px">设计</div>
<div class="dt mn2" style="left:403px;top:69px">agui</div>
<div class="dt mn2" style="left:502px;top:69px">2017/4/19 10...</div>
<div class="abs" style="left:0;top:89px;width:601px;height:22px;background:#fff"></div>
<div class="abs" style="left:0;top:111px;width:601px;height:1px;background:#a0a0a0"></div>
<div class="dt" style="left:3px;top:92px;color:#000">测试</div>
<div class="dt" style="left:202px;top:92px">王欢</div>
<div class="dt" style="left:302px;top:92px">测试</div>
<div class="dt mn2" style="left:403px;top:92px">agui</div>
<div class="dt mn2" style="left:502px;top:92px">2017/4/19 10...</div>
<div class="abs" style="left:0;top:112px;width:601px;height:22px;background:#fff"></div>
<div class="abs" style="left:0;top:134px;width:601px;height:1px;background:#a0a0a0"></div>
<div class="dt" style="left:3px;top:115px;color:#000">测试</div>
<div class="dt" style="left:202px;top:115px">刘强</div>
<div class="dt" style="left:302px;top:115px">测试</div>
<div class="dt mn2" style="left:403px;top:115px">agui</div>
<div class="dt mn2" style="left:502px;top:115px">2017/4/19 10...</div>
<div class="abs" style="left:0;top:135px;width:601px;height:22px;background:#fff"></div>
<div class="abs" style="left:0;top:157px;width:601px;height:1px;background:#a0a0a0"></div>
<div class="dt" style="left:3px;top:138px;color:#000">产品</div>
<div class="dt" style="left:202px;top:138px">龙文明</div>
<div class="dt" style="left:302px;top:138px">产品</div>
<div class="dt mn2" style="left:403px;top:138px">agui</div>
<div class="dt mn2" style="left:502px;top:138px">2017/4/19 10...</div>
<div class="abs" style="left:0;top:158px;width:601px;height:22px;background:#fff"></div>
<div class="abs" style="left:0;top:180px;width:601px;height:1px;background:#a0a0a0"></div>
<div class="dt" style="left:3px;top:161px;color:#000">开发</div>
<div class="dt" style="left:202px;top:161px">杨萌</div>
<div class="dt" style="left:302px;top:161px">开发</div>
<div class="dt mn2" style="left:403px;top:161px">agui</div>
<div class="dt mn2" style="left:502px;top:161px">2017/4/19 10...</div>
<div class="abs" style="left:0;top:181px;width:601px;height:22px;background:#fff"></div>
<div class="abs" style="left:0;top:203px;width:601px;height:1px;background:#a0a0a0"></div>
<div class="dt" style="left:3px;top:184px;color:#000">开发</div>
<div class="dt" style="left:202px;top:184px">王小伢</div>
<div class="dt" style="left:302px;top:184px">开发</div>
<div class="dt mn2" style="left:403px;top:184px">agui</div>
<div class="dt mn2" style="left:502px;top:184px">2017/4/19 10...</div>
<div class="abs" style="left:0;top:204px;width:601px;height:22px;background:#fff"></div>
<div class="abs" style="left:0;top:226px;width:601px;height:1px;background:#a0a0a0"></div>
<div class="dt" style="left:3px;top:207px;color:#000">开发</div>
<div class="dt" style="left:202px;top:207px">张龙涛</div>
<div class="dt" style="left:302px;top:207px">开发</div>
<div class="dt mn2" style="left:403px;top:207px">agui</div>
<div class="dt mn2" style="left:502px;top:207px">2017/4/19 10...</div>
<div class="abs" style="left:0;top:227px;width:601px;height:22px;background:#fff"></div>
<div class="abs" style="left:0;top:249px;width:601px;height:1px;background:#a0a0a0"></div>
<div class="dt" style="left:3px;top:230px;color:#000">开发</div>
<div class="dt" style="left:202px;top:230px">马新宇</div>
<div class="dt" style="left:302px;top:230px">开发</div>
<div class="dt mn2" style="left:403px;top:230px">agui</div>
<div class="dt mn2" style="left:502px;top:230px">2017/4/19 10...</div>
<div class="abs" style="left:0;top:250px;width:601px;height:22px;background:#fff"></div>
<div class="abs" style="left:0;top:272px;width:601px;height:1px;background:#a0a0a0"></div>
<div class="dt" style="left:3px;top:253px;color:#000">开发</div>
<div class="dt" style="left:202px;top:253px">陈万仲</div>
<div class="dt" style="left:302px;top:253px">开发</div>
<div class="dt mn2" style="left:403px;top:253px">agui</div>
<div class="dt mn2" style="left:502px;top:253px">2017/4/19 10...</div>
<div class="abs" style="left:0;top:273px;width:601px;height:22px;background:#fff"></div>
<div class="abs" style="left:0;top:295px;width:601px;height:1px;background:#a0a0a0"></div>
<div class="dt" style="left:3px;top:276px;color:#000">开发</div>
<div class="dt" style="left:202px;top:276px">赵大鹏</div>
<div class="dt" style="left:302px;top:276px">开发</div>
<div class="dt mn2" style="left:403px;top:276px">agui</div>
<div class="dt mn2" style="left:502px;top:276px">2017/4/19 10...</div>
<div class="abs" style="left:0;top:296px;width:601px;height:22px;background:#fff"></div>
<div class="abs" style="left:0;top:318px;width:601px;height:1px;background:#a0a0a0"></div>
<div class="dt" style="left:3px;top:299px;color:#000">开发</div>
<div class="dt" style="left:202px;top:299px">黄象贵</div>
<div class="dt" style="left:302px;top:299px">开发</div>
<div class="dt mn2" style="left:403px;top:299px">agui</div>
<div class="dt mn2" style="left:502px;top:299px">2017/4/19 10...</div>
<div class="abs" style="left:100px;top:20px;width:1px;height:300px;background:#a0a0a0"></div>
<div class="abs" style="left:200px;top:20px;width:1px;height:300px;background:#a0a0a0"></div>
<div class="abs" style="left:300px;top:20px;width:1px;height:300px;background:#a0a0a0"></div>
<div class="abs" style="left:400px;top:20px;width:1px;height:300px;background:#a0a0a0"></div>
<div class="abs" style="left:500px;top:20px;width:1px;height:300px;background:#a0a0a0"></div>
<div class="abs" style="left:600px;top:20px;width:1px;height:300px;background:#a0a0a0"></div>
<div class="abs" style="left:697px;top:0;width:17px;height:310px;background:linear-gradient(90deg,#e8e8e8,#f4f4f4 30%,#f4f4f4)"></div>
<svg style="left:703px;top:7px" width="7" height="4" viewBox="0 0 7 4"><path d="M0 4H7L3.5 0Z" fill="#404040"/></svg>
<div class="abs" style="left:699px;top:19px;width:13px;height:266px;border:1px solid #979797;border-radius:2px;background:linear-gradient(90deg,#f8f8f8 0%,#e8e8ea 45%,#d0d0d4 55%,#c4c4c8 100%)"></div>
<svg style="left:702px;top:146px" width="7" height="8" viewBox="0 0 7 8"><path d="M0 0.5H7M0 2.5H7M0 4.5H7M0 6.5H7" stroke="#606060" stroke-width="1"/></svg>
<svg style="left:703px;top:301px" width="7" height="4" viewBox="0 0 7 4"><path d="M0 0H7L3.5 4Z" fill="#404040"/></svg>
</div>
<div class="abs" style="left:569px;top:157px;width:714px;height:559px;border:1px solid #ff0000"></div>
</div>
<!--DLG-END-->

<div id="frame" class="abs"></div>
</body>
</html>
